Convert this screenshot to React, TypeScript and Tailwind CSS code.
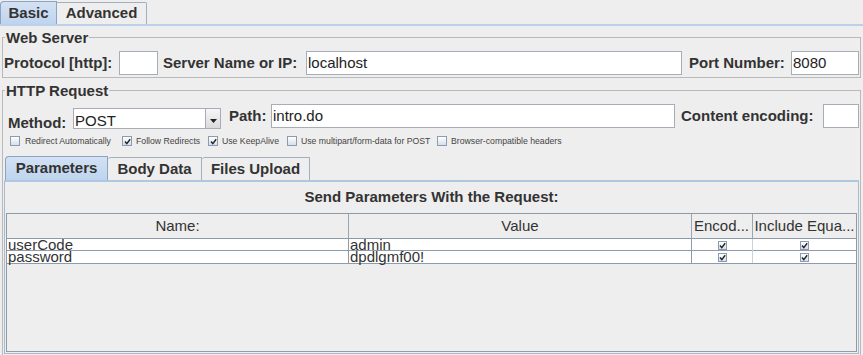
import React from 'react';

function Check({ checked, small }: { checked?: boolean; small?: boolean }) {
  return (
    <span
      className={
        small
          ? 'w-[9px] h-[9px] shrink-0 border border-[#8d9bb0] bg-linear-to-b from-[#ffffff] to-[#d6dfea] flex items-center justify-center'
          : 'w-[10px] h-[10px] shrink-0 border border-[#8d9bb0] bg-linear-to-b from-[#ffffff] to-[#d6dfea] flex items-center justify-center'
      }
    >
      {checked && (
        <svg width="7" height="7" viewBox="0 0 7 7">
          <path d="M1 3.5 L2.8 5.6 L6.2 1.2" stroke="#222" strokeWidth="1.4" fill="none" />
        </svg>
      )}
    </span>
  );
}

function Field({ value, className }: { value?: string; className: string }) {
  return (
    <div
      className={`h-[24px] shrink-0 bg-white border border-[#a6adb6] pl-[1px] text-[15px] leading-[22px] text-[#222] whitespace-nowrap overflow-hidden ${className}`}
    >
      {value}
    </div>
  );
}

const rows = [
  { name: 'userCode', value: 'admin' },
  { name: 'password', value: 'dpdlgmf00!' },
];

export default function App() {
  return (
    <div className="w-[863px] h-[355px] overflow-hidden bg-[#eeeeee] text-[#333] font-['Liberation_Sans',Arial,sans-serif] flex flex-col">
      {/* top tabs */}
      <div className="h-[26px] shrink-0 flex items-end border-b-2 border-[#bcd1e9]">
        <div className="h-[23px] w-[57px] flex items-center justify-center bg-linear-to-b from-[#d3e2f4] to-[#bed4ee] border border-b-0 border-[#8da3c0] rounded-tl-[4px] text-[15px] font-bold">
          Basic
        </div>
        <div className="h-[22px] w-[90px] flex items-center justify-center border border-b-0 border-l-0 border-[#a3afbf] rounded-tr-[2px] text-[15px] font-bold">
          Advanced
        </div>
      </div>

      {/* Web Server */}
      <fieldset className="mx-[2px] mt-[3px] p-0 border border-[#b9b9b9] shrink-0">
        <legend className="ml-[2px] px-[1px] text-[15px] font-bold leading-[17px]">Web Server</legend>
        <div className="flex items-center h-[24px] mt-[5px] mb-[2px] pl-[1px] pr-[1px] text-[15px] font-bold whitespace-nowrap">
          <span className="w-[111px] shrink-0">Protocol [http]:</span>
          <Field className="ml-[4px] w-[39px]" />
          <span className="ml-[5px] w-[138px] shrink-0">Server Name or IP:</span>
          <Field className="ml-[5px] flex-1 font-normal" value="localhost" />
          <span className="ml-[7px] w-[98px] shrink-0">Port Number:</span>
          <Field className="ml-[4px] w-[68px] font-normal" value="8080" />
        </div>
      </fieldset>

      {/* HTTP Request */}
      <fieldset className="mx-[2px] mt-[4px] p-0 pb-[4px] border border-[#b9b9b9] shrink-0">
        <legend className="ml-[2px] px-[1px] text-[15px] font-bold leading-[17px]">HTTP Request</legend>

        <div className="flex items-start h-[25px] mt-[5px] pr-[1px] text-[15px] font-bold whitespace-nowrap">
          <span className="ml-[5px] mt-[10px] w-[60px] shrink-0 leading-[17px]">Method:</span>
          <div className="ml-[5px] mt-[4px] w-[148px] h-[21px] shrink-0 flex bg-white border border-[#a6adb6] overflow-hidden">
            <span className="flex-1 pl-[1px] pt-[3px] text-[15px] leading-[17px] font-normal text-[#222]">POST</span>
            <span className="w-[15px] h-full border-l border-[#a6adb6] bg-linear-to-b from-[#f7f7f7] to-[#dadada] flex items-end justify-center pb-[5px]">
              <svg width="7" height="4" viewBox="0 0 7 4">
                <path d="M0 0 H7 L3.5 4 Z" fill="#222" />
              </svg>
            </span>
          </div>
          <span className="ml-[8px] w-[38px] shrink-0 leading-[24px]">Path:</span>
          <Field className="ml-[4px] flex-1 font-normal" value="intro.do" />
          <span className="ml-[6px] w-[137px] shrink-0 leading-[24px]">Content encoding:</span>
          <Field className="ml-[5px] w-[36px]" />
        </div>

        <div className="flex items-center h-[10px] mt-[7px] ml-[7px] text-[8.7px] leading-[10px] text-[#444] whitespace-nowrap">
          <div className="w-[112px] shrink-0 flex items-center">
            <Check />
            <span className="ml-[5px]">Redirect Automatically</span>
          </div>
          <div className="w-[86px] shrink-0 flex items-center">
            <Check checked />
            <span className="ml-[4px]">Follow Redirects</span>
          </div>
          <div className="w-[79px] shrink-0 flex items-center">
            <Check checked />
            <span className="ml-[4px]">Use KeepAlive</span>
          </div>
          <div className="w-[150px] shrink-0 flex items-center">
            <Check />
            <span className="ml-[4px]">Use multipart/form-data for POST</span>
          </div>
          <div className="flex items-center">
            <Check />
            <span className="ml-[4px]">Browser-compatible headers</span>
          </div>
        </div>

        {/* inner tabs */}
        <div className="mx-[1px] mt-[10px] h-[26px] flex items-end border-b-2 border-[#b0c7e2] text-[15px] font-bold">
          <div className="ml-[1px] h-[24px] w-[103px] flex items-center justify-center bg-linear-to-b from-[#d3e2f4] to-[#bed4ee] border border-b-0 border-[#8da3c0] rounded-tl-[4px]">
            Parameters
          </div>
          <div className="h-[23px] w-[94px] flex items-center justify-center border border-b-0 border-l-0 border-[#a3afbf] rounded-tl-[3px]">
            Body Data
          </div>
          <div className="h-[23px] w-[108px] flex items-center justify-center border border-b-0 border-l-0 border-[#a3afbf] rounded-tl-[3px]">
            Files Upload
          </div>
        </div>

        <div className="mx-[1px] h-[172px] border border-t-0 border-[#a9b9cc] flex flex-col">
          <div className="h-[31px] shrink-0 pt-[6px] text-center text-[15px] font-bold leading-[17px]">
            Send Parameters With the Request:
          </div>
          <div className="mx-[1px] h-[139px] shrink-0 border border-[#8e9bab] bg-[#eeeeee] overflow-hidden">
            <div className="grid grid-cols-[342px_343px_61px_1fr] h-[25px] border-b border-[#8e9bab] text-[15px] leading-[24px] text-[#333] whitespace-nowrap">
              <div className="border-r border-[#9aa6b4] text-center">Name:</div>
              <div className="border-r border-[#9aa6b4] text-center">Value</div>
              <div className="border-r border-[#9aa6b4] pl-[2px] overflow-hidden">Encod...</div>
              <div className="text-center overflow-hidden">Include Equa...</div>
            </div>
            {rows.map((r, i) => (
              <div
                key={r.name}
                className={
                  i === 0
                    ? 'grid grid-cols-[342px_343px_61px_1fr] h-[12px] bg-white border-b border-[#8e9bab] text-[15px] leading-[12px] text-[#333]'
                    : 'grid grid-cols-[342px_343px_61px_1fr] h-[13px] bg-white border-b border-[#8e9bab] text-[15px] leading-[12px] text-[#333]'
                }
              >
                <div className="border-r border-[#8e9bab] pl-[1px] whitespace-nowrap">{r.name}</div>
                <div className="border-r border-[#8e9bab] pl-[1px] whitespace-nowrap">{r.value}</div>
                <div className="border-r border-[#c9d1da] flex items-center justify-center">
                  <Check checked small />
                </div>
                <div className="flex items-center justify-center">
                  <Check checked small />
                </div>
              </div>
            ))}
          </div>
        </div>
      </fieldset>
    </div>
  );
}
